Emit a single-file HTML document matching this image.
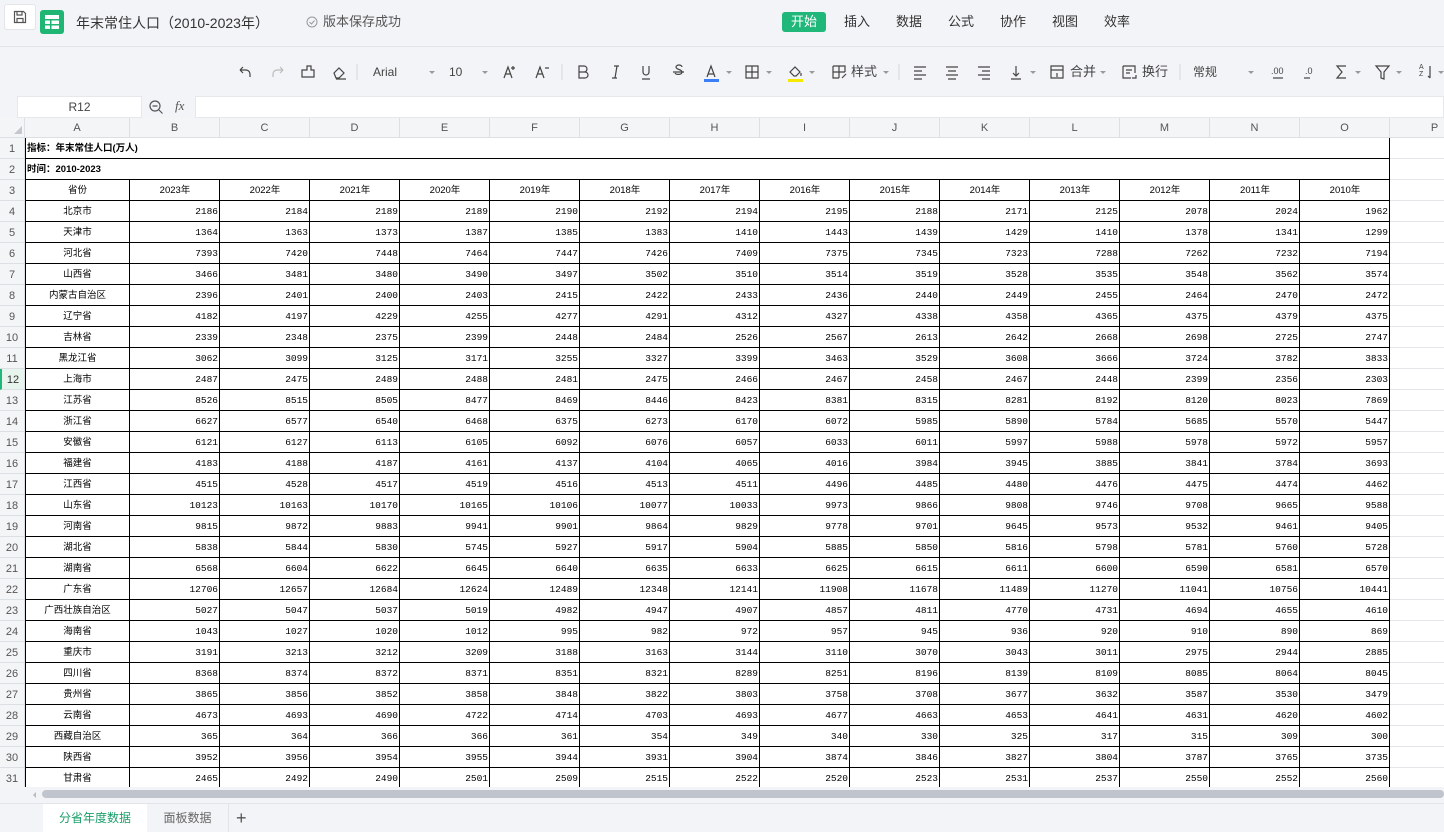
<!DOCTYPE html>
<html><head><meta charset="utf-8">
<style>
*{margin:0;padding:0;box-sizing:border-box}
body{width:1444px;height:832px;overflow:hidden;background:#f3f4f7;font-family:"Liberation Sans","Noto Sans CJK SC",sans-serif;position:relative;color:#333}
.abs{position:absolute}
#top{left:0;top:0;width:1444px;height:47px;background:#f3f4f7;border-bottom:1px solid #e2e4e9}
.menu{top:12px;height:20px;font-size:13px;line-height:20px;color:#333}
.tb{top:62px;font-size:13px;color:#444;line-height:20px}
#grid{left:0;top:118px;width:1444px;height:669px;background:#fff;overflow:hidden}
.ch{position:absolute;top:0;height:20px;background:#f4f5f7;border-right:1px solid #dcdfe4;border-bottom:1px solid #dcdfe4;font-size:11px;color:#555;text-align:center;line-height:20px}
.rh{position:absolute;left:0;width:25px;height:21px;background:#f4f5f7;border-bottom:1px solid #dcdfe4;border-right:1px solid #dcdfe4;font-size:11px;color:#555;text-align:center;line-height:22px}
.c{position:absolute;height:21px;font-size:9.5px;line-height:22px;white-space:nowrap;overflow:hidden}
.n{font-family:"Liberation Mono",monospace;text-align:right;padding-right:2px;color:#000}
.t{font-family:"Liberation Sans","Noto Sans CJK SC",sans-serif;text-align:center;color:#000}
.gl{position:absolute;background:#e3e5e9}
.bl{position:absolute;background:#000}
</style></head><body>
<div id="top" class="abs">
 <div class="abs" style="left:4px;top:4px;width:32px;height:26px;background:#fff;border:1px solid #e3e5e9;border-radius:3px"></div>
 <svg class="abs" style="left:12px;top:9px" width="16" height="16" viewBox="0 0 16 16" fill="none" stroke="#555" stroke-width="1.2"><path d="M2.5 2.5h9l2 2v9h-11z"/><path d="M5 2.5v3.5h5V2.5M5 13.5V9.5h6v4"/></svg>
 <div class="abs" style="left:40px;top:10px;width:24px;height:24px;background:#1fb572;border-radius:3px"></div>
 <svg class="abs" style="left:44px;top:14px" width="16" height="16" viewBox="0 0 16 16"><rect x="1" y="1" width="14" height="4" fill="#fff"/><rect x="1" y="6.5" width="5" height="3.5" fill="#fff"/><rect x="7.5" y="6.5" width="7.5" height="3.5" fill="#fff"/><rect x="1" y="11.5" width="5" height="3.5" fill="#fff"/><rect x="7.5" y="11.5" width="7.5" height="3.5" fill="#fff"/></svg>
 <div class="abs" style="left:76px;top:13px;font-size:14px;color:#333;line-height:20px">年末常住人口（2010-2023年）</div>
 <svg class="abs" style="left:306px;top:16px" width="12" height="12" viewBox="0 0 12 12" fill="none" stroke="#999"><circle cx="6" cy="6" r="5"/><path d="M3.5 6l2 2 3-3.5"/></svg>
 <div class="abs" style="left:323px;top:13px;font-size:13px;color:#555;line-height:18px">版本保存成功</div>
 <div class="abs menu" style="left:782px;width:44px;top:12px;background:#1fb87a;color:#fff;text-align:center;border-radius:3px">开始</div>
 <div class="abs menu" style="left:844px">插入</div>
 <div class="abs menu" style="left:896px">数据</div>
 <div class="abs menu" style="left:948px">公式</div>
 <div class="abs menu" style="left:1000px">协作</div>
 <div class="abs menu" style="left:1052px">视图</div>
 <div class="abs menu" style="left:1104px">效率</div>
</div>

<svg class="abs" style="left:230px;top:62px" width="1214" height="22" viewBox="230 62 1214 22" fill="none" stroke="#444" stroke-width="1.2">
 <path d="M240 70h6a4 4 0 0 1 4 4v3M240 70l3-3M240 70l3 3"/>
 <path d="M283 70h-6a4 4 0 0 0-4 4v3M283 70l-3-3M283 70l-3 3" stroke="#bbb"/>
 <path d="M302 77h12v-7h-3v-4h-4v4h-5z"/>
 <path d="M334 73l5-5 5 5-5 5h-3zM336 79h10"/>
 <line x1="357" y1="64" x2="357" y2="80" stroke="#ddd"/>
 <path d="M429 71l3 3 3-3" fill="#999" stroke="none"/>
 <path d="M482 71l3 3 3-3" fill="#999" stroke="none"/>
 <path d="M504 78l4-11 4 11M506 74h5M513 66v4M511 68h4"/>
 <path d="M536 78l4-11 4 11M538 74h5M545 68h4"/>
 <line x1="562" y1="64" x2="562" y2="80" stroke="#ddd"/>
 <path d="M579 66h5a3 3 0 0 1 0 6h-5zM579 72h6a3 3 0 0 1 0 6h-6z"/>
 <path d="M614 66h5M612 78h5M617 66l-2 12"/>
 <path d="M643 66v6a3 3 0 0 0 6 0v-6M642 79h8"/>
 <path d="M673 72h11M682 67a3 2 0 0 0-6 0c0 3 6 2 6 5s-6 3-7 1"/>
 <path d="M707 77l4-11 4 11M708 74h6"/>
 <rect x="704" y="79" width="15" height="3" fill="#3b7ef5" stroke="none"/>
 <path d="M726 71l3 3 3-3" fill="#999" stroke="none"/>
 <path d="M746 66h12v12h-12zM752 66v12M746 72h12"/>
 <path d="M766 71l3 3 3-3" fill="#999" stroke="none"/>
 <path d="M790 72l5-5 5 5-4 4h-2zM801 73v3"/>
 <rect x="788" y="79" width="15" height="3" fill="#f5e900" stroke="none"/>
 <path d="M809 71l3 3 3-3" fill="#999" stroke="none"/>
 <path d="M833 66h12v6M833 66v12h6M839 66v12M833 72h12M842 78l4-4"/>
 <path d="M883 71l3 3 3-3" fill="#999" stroke="none"/>
 <line x1="899" y1="64" x2="899" y2="80" stroke="#ddd"/>
 <path d="M914 67h12M914 71h8M914 75h12M914 79h8"/>
 <path d="M946 67h12M948 71h8M946 75h12M948 79h8"/>
 <path d="M978 67h12M982 71h8M978 75h12M982 79h8"/>
 <path d="M1016 66v10M1013 73l3 3 3-3M1011 79h10"/>
 <path d="M1030 71l3 3 3-3" fill="#999" stroke="none"/>
 <path d="M1051 66h12v12h-12zM1051 70h12M1057 73v4"/>
 <path d="M1100 71l3 3 3-3" fill="#999" stroke="none"/>
 <path d="M1123 66h12v7M1123 66v12h8M1126 70h6M1126 73h4M1136 75v3h-4"/>
 <line x1="1180" y1="64" x2="1180" y2="80" stroke="#ddd"/>
 <path d="M1248 71l3 3 3-3" fill="#999" stroke="none"/>
 <path d="M1273 78h10"/>
 <path d="M1304 78h6"/>
 <path d="M1346 66h-9l5 6-5 6h9"/>
 <path d="M1355 71l3 3 3-3" fill="#999" stroke="none"/>
 <path d="M1376 66h13l-5 6v7l-3-1v-6z"/>
 <path d="M1396 71l3 3 3-3" fill="#999" stroke="none"/>
 <path d="M1430 66v12M1428 76l2 2"/>
 <path d="M1438 71l3 3 3-3" fill="#999" stroke="none"/>
</svg>
<div class="abs tb" style="left:373px;font-size:12px">Arial</div>
<div class="abs tb" style="left:449px;font-size:12px">10</div>
<div class="abs tb" style="left:851px">样式</div>
<div class="abs tb" style="left:1070px">合并</div>
<div class="abs tb" style="left:1142px">换行</div>
<div class="abs tb" style="left:1193px;font-size:12px">常规</div>
<div class="abs tb" style="left:1271px;font-size:9px;top:61px">.00</div>
<div class="abs tb" style="left:1305px;font-size:9px;top:61px">.0</div>
<div class="abs tb" style="left:1419px;font-size:7px;top:64px;line-height:7px">A<br>Z</div>

<div class="abs" style="left:17px;top:96px;width:125px;height:22px;background:#fff;border:1px solid #e6e8ec;font-size:12px;color:#444;text-align:center;line-height:20px">R12</div>
<svg class="abs" style="left:148px;top:99px" width="16" height="16" viewBox="0 0 16 16" fill="none" stroke="#555" stroke-width="1.2"><circle cx="7" cy="7" r="5"/><path d="M4.5 7h5M11 11l3.5 3.5"/></svg>
<div class="abs" style="left:175px;top:98px;font-family:'Liberation Serif',serif;font-style:italic;font-size:13px;color:#555">fx</div>
<div class="abs" style="left:195px;top:96px;width:1249px;height:22px;background:#fff;border:1px solid #e6e8ec"></div>

<div id="grid" class="abs"></div>

<div class="abs" style="left:0;top:787px;width:1444px;height:16px;background:#f3f4f7"></div>
<div class="abs" style="left:33px;top:792px;width:0;height:0;border-top:3px solid transparent;border-bottom:3px solid transparent;border-right:3px solid #bbb"></div>
<div class="abs" style="left:42px;top:790px;width:1402px;height:8px;background:#c0c5cd;border-radius:4px"></div>
<div class="abs" style="left:0;top:803px;width:1444px;height:29px;background:#f3f4f7;border-top:1px solid #e2e4e9"></div>
<div class="abs" style="left:43px;top:804px;width:104px;height:28px;background:#fff;color:#1a9e68;font-size:12px;text-align:center;line-height:28px">分省年度数据</div>
<div class="abs" style="left:147px;top:804px;width:82px;height:28px;border-right:1px solid #e2e4e9;color:#666;font-size:12px;text-align:center;line-height:28px">面板数据</div>
<div class="abs" style="left:236px;top:806px;font-size:18px;color:#555;line-height:24px">+</div>

<script>
var data=`北京市 2186 2184 2189 2189 2190 2192 2194 2195 2188 2171 2125 2078 2024 1962
天津市 1364 1363 1373 1387 1385 1383 1410 1443 1439 1429 1410 1378 1341 1299
河北省 7393 7420 7448 7464 7447 7426 7409 7375 7345 7323 7288 7262 7232 7194
山西省 3466 3481 3480 3490 3497 3502 3510 3514 3519 3528 3535 3548 3562 3574
内蒙古自治区 2396 2401 2400 2403 2415 2422 2433 2436 2440 2449 2455 2464 2470 2472
辽宁省 4182 4197 4229 4255 4277 4291 4312 4327 4338 4358 4365 4375 4379 4375
吉林省 2339 2348 2375 2399 2448 2484 2526 2567 2613 2642 2668 2698 2725 2747
黑龙江省 3062 3099 3125 3171 3255 3327 3399 3463 3529 3608 3666 3724 3782 3833
上海市 2487 2475 2489 2488 2481 2475 2466 2467 2458 2467 2448 2399 2356 2303
江苏省 8526 8515 8505 8477 8469 8446 8423 8381 8315 8281 8192 8120 8023 7869
浙江省 6627 6577 6540 6468 6375 6273 6170 6072 5985 5890 5784 5685 5570 5447
安徽省 6121 6127 6113 6105 6092 6076 6057 6033 6011 5997 5988 5978 5972 5957
福建省 4183 4188 4187 4161 4137 4104 4065 4016 3984 3945 3885 3841 3784 3693
江西省 4515 4528 4517 4519 4516 4513 4511 4496 4485 4480 4476 4475 4474 4462
山东省 10123 10163 10170 10165 10106 10077 10033 9973 9866 9808 9746 9708 9665 9588
河南省 9815 9872 9883 9941 9901 9864 9829 9778 9701 9645 9573 9532 9461 9405
湖北省 5838 5844 5830 5745 5927 5917 5904 5885 5850 5816 5798 5781 5760 5728
湖南省 6568 6604 6622 6645 6640 6635 6633 6625 6615 6611 6600 6590 6581 6570
广东省 12706 12657 12684 12624 12489 12348 12141 11908 11678 11489 11270 11041 10756 10441
广西壮族自治区 5027 5047 5037 5019 4982 4947 4907 4857 4811 4770 4731 4694 4655 4610
海南省 1043 1027 1020 1012 995 982 972 957 945 936 920 910 890 869
重庆市 3191 3213 3212 3209 3188 3163 3144 3110 3070 3043 3011 2975 2944 2885
四川省 8368 8374 8372 8371 8351 8321 8289 8251 8196 8139 8109 8085 8064 8045
贵州省 3865 3856 3852 3858 3848 3822 3803 3758 3708 3677 3632 3587 3530 3479
云南省 4673 4693 4690 4722 4714 4703 4693 4677 4663 4653 4641 4631 4620 4602
西藏自治区 365 364 366 366 361 354 349 340 330 325 317 315 309 300
陕西省 3952 3956 3954 3955 3944 3931 3904 3874 3846 3827 3804 3787 3765 3735
甘肃省 2465 2492 2490 2501 2509 2515 2522 2520 2523 2531 2537 2550 2552 2560`.split("\n").map(function(l){return l.split(" ")});
var g=document.getElementById("grid"),h="";
var xs=[25,130];for(var i=0;i<14;i++)xs.push(220+i*90);xs.push(1480);
var L="ABCDEFGHIJKLMNOP";
h+='<div class="ch" style="left:0;width:25px"></div><div class="abs" style="left:14px;top:8px;width:0;height:0;border-left:8px solid transparent;border-bottom:8px solid #c4c8ce"></div>';
for(var i=0;i<16;i++)h+='<div class="ch" style="left:'+xs[i]+'px;width:'+(xs[i+1]-xs[i])+'px">'+L[i]+'</div>';
for(var r=0;r<31;r++){var y=20+r*21;h+='<div class="rh" style="top:'+y+'px'+(r==11?';background:#e8f5ee;border-left:2px solid #1fb87a;color:#333':'')+'">'+(r+1)+'</div>';
 h+='<div class="gl" style="left:1390px;top:'+(y+20)+'px;width:60px;height:1px"></div>';}
h+='<div class="c t" style="left:27px;top:20px;width:400px;text-align:left;font-weight:bold">指标：年末常住人口(万人)</div>';
h+='<div class="c t" style="left:27px;top:41px;width:400px;text-align:left;font-weight:bold">时间：2010-2023</div>';
var hdr=["省份"];for(var y=2023;y>=2010;y--)hdr.push(y+"年");
function row(vals,r,isHdr){var y=20+r*21,s="";for(var i=0;i<15;i++){var w=xs[i+1]-xs[i];var cls=(i==0||isHdr)?"c t":"c n";s+='<div class="'+cls+'" style="left:'+xs[i]+'px;top:'+y+'px;width:'+w+'px">'+vals[i]+'</div>';}return s;}
h+=row(hdr,2,true);
for(var r=0;r<data.length;r++)h+=row(data[r],r+3,false);
for(var r=0;r<31;r++)h+='<div class="bl" style="left:25px;top:'+(40+r*21)+'px;width:1365px;height:1px"></div>';
h+='<div class="bl" style="left:1389px;top:20px;width:1px;height:660px"></div>';
h+='<div class="bl" style="left:25px;top:20px;width:1px;height:660px"></div>';
for(var i=2;i<15;i++)h+='<div class="bl" style="left:'+(xs[i]-1)+'px;top:62px;width:1px;height:620px"></div>';
h+='<div class="bl" style="left:129px;top:62px;width:1px;height:620px"></div>';
g.innerHTML=h;
</script>
</body></html>
